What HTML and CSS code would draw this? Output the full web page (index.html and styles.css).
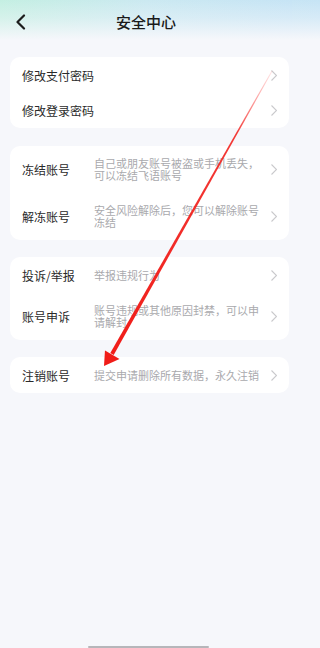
FILE: index.html
```html
<!DOCTYPE html>
<html lang="zh-CN">
<head>
<meta charset="utf-8">
<title>安全中心</title>
<link rel="stylesheet" href="styles.css">
</head>
<body>
<div class="page">
  <header class="topbar">
    <svg class="back" width="12" height="16" viewBox="0 0 12 16"><path d="M9 1.5 L2.5 8 L9 14.5" fill="none" stroke="#1c1c1c" stroke-width="2.2" stroke-linecap="round" stroke-linejoin="round"/></svg>
    <h1 class="title">安全中心</h1>
  </header>

  <section class="card">
    <div class="row"><span class="label">修改支付密码</span><span class="desc"></span><svg class="chev" width="6" height="11" viewBox="0 0 6 11"><path d="M0.5 0.5 L5.5 5.5 L0.5 10.5" fill="none" stroke="#c9c9cc" stroke-width="1.1"/></svg></div>
    <div class="row"><span class="label">修改登录密码</span><span class="desc"></span><svg class="chev" width="6" height="11" viewBox="0 0 6 11"><path d="M0.5 0.5 L5.5 5.5 L0.5 10.5" fill="none" stroke="#c9c9cc" stroke-width="1.1"/></svg></div>
  </section>

  <section class="card">
    <div class="row"><span class="label">冻结账号</span><span class="desc">自己或朋友账号被盗或手机丢失，可以冻结飞语账号</span><svg class="chev" width="6" height="11" viewBox="0 0 6 11"><path d="M0.5 0.5 L5.5 5.5 L0.5 10.5" fill="none" stroke="#c9c9cc" stroke-width="1.1"/></svg></div>
    <div class="row"><span class="label">解冻账号</span><span class="desc">安全风险解除后，您可以解除账号冻结</span><svg class="chev" width="6" height="11" viewBox="0 0 6 11"><path d="M0.5 0.5 L5.5 5.5 L0.5 10.5" fill="none" stroke="#c9c9cc" stroke-width="1.1"/></svg></div>
  </section>

  <section class="card">
    <div class="row"><span class="label">投诉/举报</span><span class="desc">举报违规行为</span><svg class="chev" width="6" height="11" viewBox="0 0 6 11"><path d="M0.5 0.5 L5.5 5.5 L0.5 10.5" fill="none" stroke="#c9c9cc" stroke-width="1.1"/></svg></div>
    <div class="row"><span class="label">账号申诉</span><span class="desc">账号违规或其他原因封禁，可以申请解封</span><svg class="chev" width="6" height="11" viewBox="0 0 6 11"><path d="M0.5 0.5 L5.5 5.5 L0.5 10.5" fill="none" stroke="#c9c9cc" stroke-width="1.1"/></svg></div>
  </section>

  <section class="card">
    <div class="row"><span class="label">注销账号</span><span class="desc">提交申请删除所有数据，永久注销</span><svg class="chev" width="6" height="11" viewBox="0 0 6 11"><path d="M0.5 0.5 L5.5 5.5 L0.5 10.5" fill="none" stroke="#c9c9cc" stroke-width="1.1"/></svg></div>
  </section>

  <svg class="annot" width="292" height="648" viewBox="0 0 292 648">
    <defs>
      <linearGradient id="fade" x1="272" y1="71" x2="112" y2="354" gradientUnits="userSpaceOnUse">
        <stop offset="0" stop-color="#ff5a5a" stop-opacity="0.15"/>
        <stop offset="0.22" stop-color="#f22420" stop-opacity="0.9"/>
        <stop offset="1" stop-color="#f01c18" stop-opacity="1"/>
      </linearGradient>
    </defs>
    <polygon points="271.6,70.8 272.4,71.2 113.7,354.9 110.3,353.1" fill="url(#fade)"/>
    <polygon points="104,366 105,350.5 119.5,359" fill="#f01c18"/>
  </svg>
  <div class="home-indicator"></div>
</div>
</body>
</html>
```
FILE: styles.css
```css
html, body {
  margin: 0;
  padding: 0;
}
html {
  background:
    linear-gradient(180deg, rgba(246,247,251,0) 0px, rgba(246,247,251,0.35) 18px, #f6f7fb 40px, #f6f7fb 100%) no-repeat,
    linear-gradient(90deg, #c4efe2 0%, #cbe9f1 50%, #c6e4f5 100%) no-repeat #f6f7fb;
  background-size: 100% 648px, 100% 48px;
}
body {
  font-family: "Noto Sans CJK SC", "Noto Sans", sans-serif;
}
.page {
  position: relative;
  width: 292px;
  height: 648px;
  overflow: hidden;
  background:
    linear-gradient(180deg, rgba(246,247,251,0) 0px, rgba(246,247,251,0.35) 18px, #f6f7fb 40px, #f6f7fb 100%),
    linear-gradient(90deg, #c4efe2 0%, #cbe9f1 50%, #c6e4f5 100%);
}
.topbar {
  height: 44px;
  display: flex;
  align-items: center;
  justify-content: center;
  position: relative;
}
.back {
  position: absolute;
  left: 15px;
  top: 14px;
}
.title {
  margin: 0;
  font-size: 15px;
  font-weight: 500;
  color: #1a1a1a;
  line-height: 44px;
}
.card {
  background: #ffffff;
  border-radius: 10px;
  margin: 13px 3.5px 0 9.5px;
}
.card + .card {
  margin-top: 17.5px;
}
.row {
  display: flex;
  align-items: center;
  padding: 12.5px 12px 11.5px 12.5px;
}
.label {
  width: 72px;
  flex: none;
  font-size: 12px;
  line-height: 11.5px;
  color: #2a2a2a;
  white-space: nowrap;
}
.desc {
  width: 168px;
  flex: none;
  font-size: 11px;
  line-height: 11.5px;
  color: #a9a9ad;
}
.chev {
  margin-left: auto;
  flex: none;
  display: block;
}
.annot {
  position: absolute;
  left: 0;
  top: 0;
  pointer-events: none;
}
.home-indicator {
  position: absolute;
  left: 88px;
  bottom: 0;
  width: 121px;
  height: 2.5px;
  background: #b6b6ba;
  border-radius: 1px;
}
```
